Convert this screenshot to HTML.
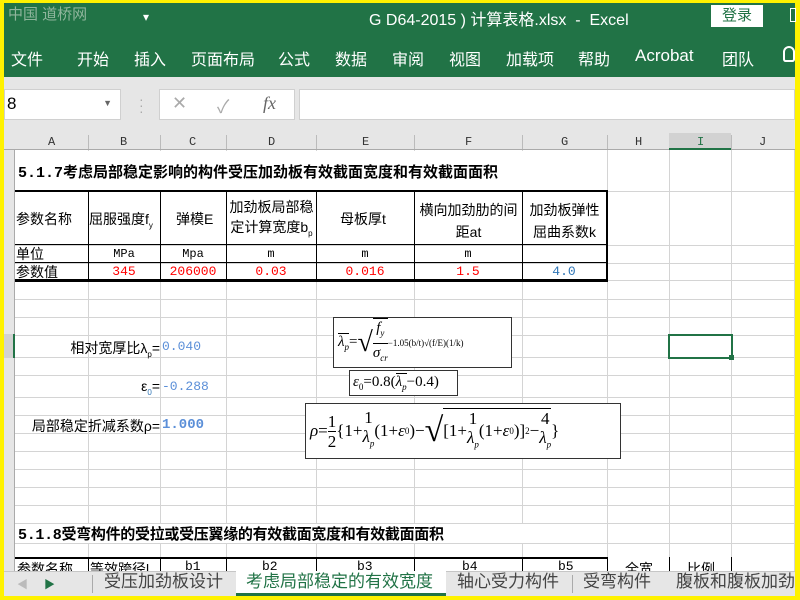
<!DOCTYPE html>
<html><head><meta charset="utf-8"><style>
*{margin:0;padding:0;box-sizing:border-box}
body{width:800px;height:600px;overflow:hidden;background:#fff200;position:relative;font-family:"Liberation Sans","Noto Sans CJK SC",sans-serif}
.a{position:absolute}
.cj{font-family:"Liberation Mono","Noto Sans CJK SC",monospace}
.vl{position:absolute;top:150px;height:421px;width:1px;background:#d4d4d4}
.hl{position:absolute;left:15px;width:780px;height:1px;background:#d4d4d4}
.t{position:absolute;font-size:13px;white-space:nowrap;color:#000}
.tab{position:absolute;top:570px;height:25px;font-size:17px;color:#444;line-height:24px}
.fr{display:inline-flex;flex-direction:column;align-items:center;vertical-align:middle;line-height:19px}
.fr>span+span{border-top:1px solid #000}
.f{display:flex;align-items:center;white-space:nowrap;font-family:'Liberation Serif',serif;height:100%}
</style></head><body>
<div class="a" style="left:4px;top:3px;width:791px;height:593px;background:#fff"></div>
<div class="a" style="left:4px;top:3px;width:791px;height:74px;background:#217346"></div>
<div class="a" style="left:8px;top:3px;font-size:15px;color:#8fb59c">中国 道桥网</div>
<div class="a" style="left:143px;top:10px;color:#fff;font-size:12px">▾</div>
<div class="a" style="left:369px;top:6px;color:#fff;font-size:16px">G D64-2015 ) 计算表格.xlsx &nbsp;-&nbsp; Excel</div>
<div class="a" style="left:711px;top:5px;width:52px;height:22px;background:#fff;color:#217346;font-size:15px;text-align:center;line-height:22px">登录</div>
<div class="a" style="left:790px;top:8px;width:6px;height:14px;border:1px solid #fff"></div>
<div class="a" style="top:46px;left:11px;color:#fff;font-size:16px;white-space:nowrap">
<span style="position:absolute;left:0">文件</span><span style="position:absolute;left:66px">开始</span><span style="position:absolute;left:123px">插入</span><span style="position:absolute;left:180px">页面布局</span><span style="position:absolute;left:267px">公式</span><span style="position:absolute;left:324px">数据</span><span style="position:absolute;left:381px">审阅</span><span style="position:absolute;left:438px">视图</span><span style="position:absolute;left:495px">加载项</span><span style="position:absolute;left:567px">帮助</span><span style="position:absolute;left:624px;font-size:17px">Acrobat</span><span style="position:absolute;left:711px">团队</span><span style="position:absolute;left:772px;width:12px;height:16px;border:2px solid #fff;border-radius:7px 7px 3px 3px"></span></div>
<div class="a" style="left:4px;top:77px;width:791px;height:56px;background:#e6e6e6"></div>
<div class="a" style="left:4px;top:89px;width:117px;height:31px;background:#fff;border:1px solid #d0d0d0;font-size:17px;padding:4px 2px">8<span style="position:absolute;right:8px;top:8px;font-size:9px;color:#666">▼</span></div>
<div class="a" style="left:139px;top:96px;color:#aaa;font-size:14px;line-height:6px">·<br>·<br>·</div>
<div class="a" style="left:159px;top:89px;width:136px;height:31px;background:#fff;border:1px solid #d0d0d0;color:#aaa;font-size:18px"><span style="position:absolute;left:12px;top:3px">✕</span><span style="position:absolute;left:57px;top:3px">✓</span><span style="position:absolute;left:103px;top:3px;font-family:'Liberation Serif',serif;font-style:italic;color:#666">fx</span></div>
<div class="a" style="left:299px;top:89px;width:496px;height:31px;background:#fff;border:1px solid #d0d0d0"></div>
<div class="a" style="left:4px;top:133px;width:791px;height:17px;background:#e6e6e6;border-bottom:1px solid #aaa"></div>
<div class="a" style="left:4px;top:150px;width:11px;height:421px;background:#e6e6e6;border-right:1px solid #aaa"></div>
<div class="a" style="left:669px;top:133px;width:62px;height:17px;background:#d2d2d2;border-bottom:2px solid #217346"></div>
<div class="a" style="left:4px;top:334px;width:11px;height:24px;background:#d2d2d2;border-right:2px solid #217346"></div>
<div class="a cj" style="top:135px;left:0;font-size:12px;color:#333">
<span style="position:absolute;left:48px">A</span><span style="position:absolute;left:120px">B</span><span style="position:absolute;left:189px">C</span><span style="position:absolute;left:268px">D</span><span style="position:absolute;left:362px">E</span><span style="position:absolute;left:465px">F</span><span style="position:absolute;left:561px">G</span><span style="position:absolute;left:635px">H</span><span style="position:absolute;left:697px;color:#217346">I</span><span style="position:absolute;left:759px">J</span></div>
<div class="a" style="left:88px;top:135px;width:1px;height:14px;background:#bbb"></div><div class="a" style="left:160px;top:135px;width:1px;height:14px;background:#bbb"></div><div class="a" style="left:226px;top:135px;width:1px;height:14px;background:#bbb"></div><div class="a" style="left:316px;top:135px;width:1px;height:14px;background:#bbb"></div><div class="a" style="left:414px;top:135px;width:1px;height:14px;background:#bbb"></div><div class="a" style="left:522px;top:135px;width:1px;height:14px;background:#bbb"></div><div class="a" style="left:607px;top:135px;width:1px;height:14px;background:#bbb"></div><div class="a" style="left:731px;top:135px;width:1px;height:14px;background:#bbb"></div>
<div class="vl" style="left:88px"></div><div class="vl" style="left:160px"></div><div class="vl" style="left:226px"></div><div class="vl" style="left:316px"></div><div class="vl" style="left:414px"></div><div class="vl" style="left:522px"></div><div class="vl" style="left:607px"></div><div class="vl" style="left:669px"></div><div class="vl" style="left:731px"></div><div class="vl" style="left:794px"></div>
<div class="hl" style="top:191px"></div><div class="hl" style="top:245px"></div><div class="hl" style="top:263px"></div><div class="hl" style="top:280px"></div><div class="hl" style="top:299px"></div><div class="hl" style="top:317px"></div><div class="hl" style="top:335px"></div><div class="hl" style="top:357px"></div><div class="hl" style="top:375px"></div><div class="hl" style="top:397px"></div><div class="hl" style="top:415px"></div><div class="hl" style="top:433px"></div><div class="hl" style="top:451px"></div><div class="hl" style="top:469px"></div><div class="hl" style="top:487px"></div><div class="hl" style="top:505px"></div><div class="hl" style="top:523px"></div><div class="hl" style="top:543px"></div>
<div class="a" style="left:16px;top:151px;width:590px;height:40px;background:#fff"></div>
<div class="a" style="left:16px;top:524px;width:590px;height:19px;background:#fff"></div>
<div class="t" style="left:18px;top:161px;font-size:15px;font-weight:bold;font-family:'Liberation Mono','Noto Sans CJK SC',monospace">5.1.7考虑局部稳定影响的构件受压加劲板有效截面宽度和有效截面面积</div>
<div class="t" style="left:18px;top:523px;font-size:15px;font-weight:bold;font-family:'Liberation Mono','Noto Sans CJK SC',monospace;letter-spacing:-0.3px">5.1.8受弯构件的受拉或受压翼缘的有效截面宽度和有效截面面积</div>
<div class="a" style="left:15px;top:190px;width:592px;height:2px;background:#000"></div>
<div class="a" style="left:15px;top:244px;width:592px;height:1px;background:#000"></div>
<div class="a" style="left:15px;top:262px;width:592px;height:1px;background:#000"></div>
<div class="a" style="left:15px;top:279px;width:592px;height:3px;background:#000"></div>
<div class="a" style="left:88px;top:190px;width:1px;height:90px;background:#000"></div>
<div class="a" style="left:160px;top:190px;width:1px;height:90px;background:#000"></div>
<div class="a" style="left:226px;top:190px;width:1px;height:90px;background:#000"></div>
<div class="a" style="left:316px;top:190px;width:1px;height:90px;background:#000"></div>
<div class="a" style="left:414px;top:190px;width:1px;height:90px;background:#000"></div>
<div class="a" style="left:522px;top:190px;width:1px;height:90px;background:#000"></div>
<div class="a" style="left:606px;top:190px;width:2px;height:92px;background:#000"></div>
<div class="t" style="left:16px;top:209px;font-size:14px">参数名称</div>
<div class="t" style="left:89px;top:209px;font-size:14px">屈服强度f<sub style="font-size:8px">y</sub></div>
<div class="t" style="left:176px;top:209px;font-size:14px">弹模E</div>
<div class="t" style="left:227px;top:197px;line-height:20px;text-align:center;width:89px;font-size:14px">加劲板局部稳<br>定计算宽度b<sub style="font-size:8px">p</sub></div>
<div class="t" style="left:340px;top:209px;font-size:14px">母板厚t</div>
<div class="t" style="left:415px;top:199px;line-height:22px;text-align:center;width:107px;font-size:14px">横向加劲肋的间<br>距at</div>
<div class="t" style="left:523px;top:199px;line-height:22px;text-align:center;width:83px;font-size:14px">加劲板弹性<br>屈曲系数k</div>
<div class="t" style="left:16px;top:244px;font-size:14px">单位</div>
<div class="t cj" style="left:88px;width:72px;text-align:center;top:247px;font-size:12px">MPa</div>
<div class="t cj" style="left:160px;width:66px;text-align:center;top:247px;font-size:12px">Mpa</div>
<div class="t cj" style="left:226px;width:90px;text-align:center;top:247px;font-size:12px">m</div>
<div class="t cj" style="left:316px;width:98px;text-align:center;top:247px;font-size:12px">m</div>
<div class="t cj" style="left:414px;width:108px;text-align:center;top:247px;font-size:12px">m</div>
<div class="t" style="left:16px;top:262px;font-size:14px">参数值</div>
<div class="t cj" style="left:88px;width:72px;text-align:center;top:264px;color:red;font-size:13px">345</div>
<div class="t cj" style="left:160px;width:66px;text-align:center;top:264px;color:red;font-size:13px">206000</div>
<div class="t cj" style="left:226px;width:90px;text-align:center;top:264px;color:red;font-size:13px">0.03</div>
<div class="t cj" style="left:316px;width:98px;text-align:center;top:264px;color:red;font-size:13px">0.016</div>
<div class="t cj" style="left:414px;width:108px;text-align:center;top:264px;color:red;font-size:13px">1.5</div>
<div class="t cj" style="left:522px;width:84px;text-align:center;top:264px;color:#2e75b6;font-size:13px">4.0</div>
<div class="t" style="right:640px;top:338px;font-size:14px">相对宽厚比λ<sub style="font-size:8px">p</sub>=</div>
<div class="t cj" style="left:162px;top:339px;color:#5b8fd8;font-size:13px">0.040</div>
<div class="t" style="right:640px;top:378px;font-size:14px">ε<sub style="font-size:8px;color:#2e75b6">0</sub>=</div>
<div class="t cj" style="left:162px;top:379px;color:#5b8fd8;font-size:13px">-0.288</div>
<div class="t" style="right:640px;top:416px;font-size:14px">局部稳定折减系数ρ=</div>
<div class="t cj" style="left:162px;top:417px;color:#5b8fd8;font-size:14px;font-weight:bold">1.000</div>
<div class="a" style="left:668px;top:334px;width:65px;height:25px;border:2px solid #217346"></div>
<div class="a" style="left:729px;top:355px;width:5px;height:5px;background:#217346"></div>
<div class="a" style="left:333px;top:317px;width:179px;height:51px;background:#fff;border:1px solid #333;font-size:15px">
<div class="f" style="padding-left:4px"><i style="border-top:1px solid #000">λ<sub style="font-size:9px">p</sub></i>=<span style="font-size:28px;font-weight:100;line-height:1">√</span><span class="fr" style="border-top:1px solid #000"><i>f<sub style="font-size:9px">y</sub></i><i style="border-top:1px solid #000">σ<sub style="font-size:9px">cr</sub></i></span><span style="font-size:9px">−1.05(b/t)√(f/E)(1/k)</span></div></div>
<div class="a" style="left:349px;top:370px;width:109px;height:26px;background:#fff;border:1px solid #333;font-family:'Liberation Serif',serif;font-size:15px;padding:3px 3px;white-space:nowrap"><i>ε</i><sub style="font-size:9px">0</sub>=0.8(<i style="border-top:1px solid #000">λ<sub style="font-size:9px">p</sub></i>−0.4)</div>
<div class="a" style="left:305px;top:403px;width:316px;height:56px;background:#fff;border:1px solid #333;font-size:17px">
<div class="f" style="padding-left:4px"><i>ρ</i>=<span class="fr"><span>1</span><span>2</span></span>{1+<span class="fr"><span>1</span><i>λ<sub style="font-size:9px">p</sub></i></span>(1+<i>ε</i><sub style="font-size:9px">0</sub>)−<span style="font-size:34px;line-height:1">√</span><span style="border-top:1px solid #000;display:inline-flex;align-items:center">[1+<span class="fr"><span>1</span><i>λ<sub style="font-size:9px">p</sub></i></span>(1+<i>ε</i><sub style="font-size:9px">0</sub>)]<sup style="font-size:9px">2</sup>−<span class="fr"><span>4</span><i>λ<sub style="font-size:9px">p</sub></i></span></span>}</div></div>
<div class="a" style="left:15px;top:557px;width:592px;height:2px;background:#000"></div>
<div class="a" style="left:88px;top:557px;width:1px;height:14px;background:#000"></div><div class="a" style="left:160px;top:557px;width:1px;height:14px;background:#000"></div><div class="a" style="left:226px;top:557px;width:1px;height:14px;background:#000"></div><div class="a" style="left:316px;top:557px;width:1px;height:14px;background:#000"></div><div class="a" style="left:414px;top:557px;width:1px;height:14px;background:#000"></div><div class="a" style="left:522px;top:557px;width:1px;height:14px;background:#000"></div><div class="a" style="left:607px;top:557px;width:1px;height:14px;background:#000"></div><div class="a" style="left:669px;top:557px;width:1px;height:14px;background:#000"></div><div class="a" style="left:731px;top:557px;width:1px;height:14px;background:#000"></div>
<div class="t" style="left:17px;top:559px;font-size:14px">参数名称</div><div class="t" style="left:90px;top:559px;font-size:14px">等效跨径l</div><div class="t cj" style="left:185px;top:559px">b1</div><div class="t cj" style="left:262px;top:559px">b2</div><div class="t cj" style="left:357px;top:559px">b3</div><div class="t cj" style="left:462px;top:559px">b4</div><div class="t cj" style="left:558px;top:559px">b5</div><div class="t" style="left:625px;top:559px;font-size:14px">全宽</div><div class="t" style="left:687px;top:559px;font-size:14px">比例</div>
<div class="a" style="left:4px;top:571px;width:791px;height:25px;background:#e6e6e6;border-top:1px solid #c6c6c6"></div>
<div class="a" style="left:17px;top:576px;color:#bbb;font-size:11px">◀</div>
<div class="a" style="left:44px;top:576px;color:#217346;font-size:11px">▶</div>
<div class="a" style="left:92px;top:575px;width:1px;height:18px;background:#aaa"></div>
<div class="tab" style="left:104px">受压加劲板设计</div>
<div class="a" style="left:236px;top:571px;width:210px;height:25px;background:#fff;border-bottom:3px solid #217346"></div>
<div class="tab" style="left:246px;color:#217346">考虑局部稳定的有效宽度</div>
<div class="tab" style="left:457px">轴心受力构件</div>
<div class="a" style="left:572px;top:575px;width:1px;height:18px;background:#aaa"></div>
<div class="tab" style="left:583px">受弯构件</div>
<div class="tab" style="left:676px">腹板和腹板加劲</div>
</body></html>
